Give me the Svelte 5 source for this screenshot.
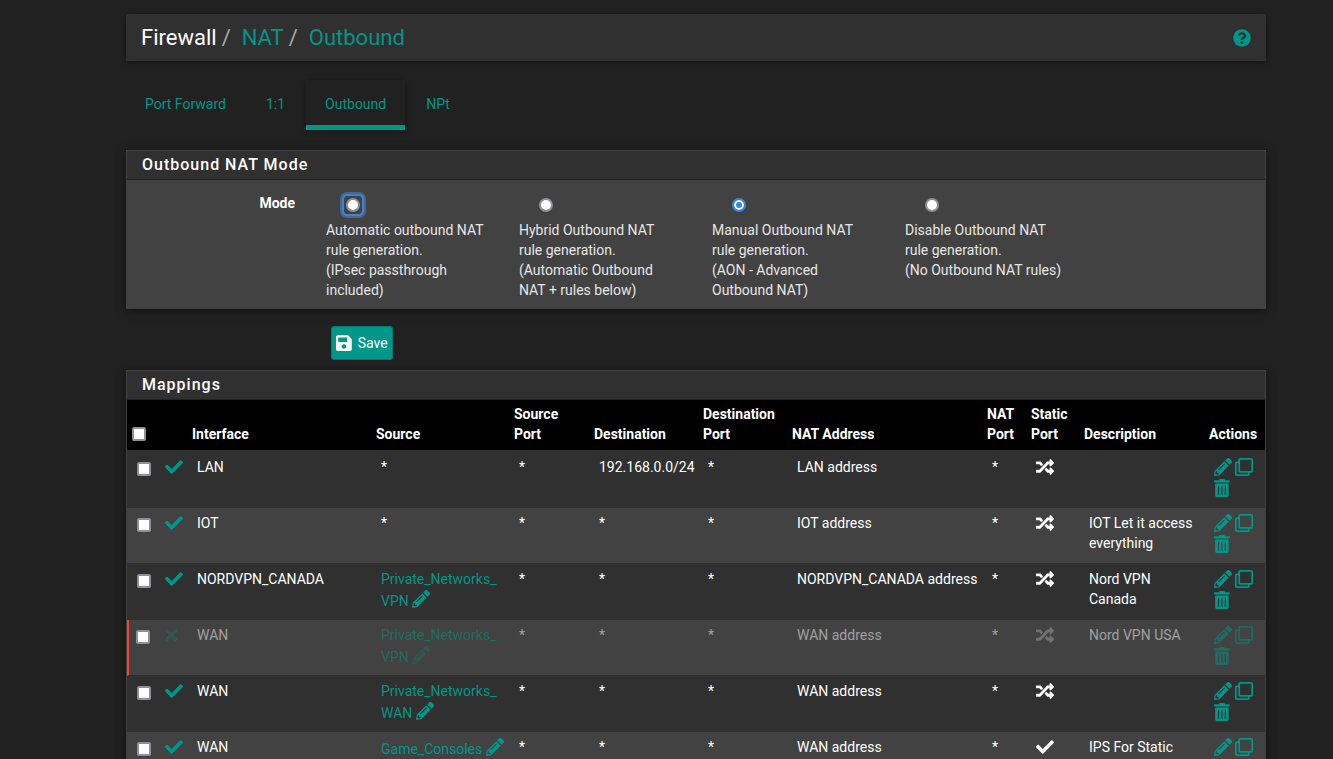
<script lang="ts">
  import { onMount } from 'svelte';

  // Solid icons, each with its own viewBox width (height is always 512).
  const icons = {
    help: { w: 512, d: 'M504 256c0 136.997-111.043 248-248 248S8 392.997 8 256C8 119.083 119.043 8 256 8s248 111.083 248 248zM262.655 90c-54.497 0-89.255 22.957-116.549 63.758-3.536 5.286-2.353 12.415 2.715 16.258l34.699 26.31c5.205 3.947 12.621 3.008 16.665-2.122 17.864-22.658 30.113-35.797 57.303-35.797 20.429 0 45.698 13.148 45.698 32.958 0 14.976-12.363 22.667-32.534 33.976C247.128 238.528 216 254.941 216 296v4c0 6.627 5.373 12 12 12h56c6.627 0 12-5.373 12-12v-1.333c0-28.462 83.186-29.647 83.186-106.667 0-58.002-60.165-102-116.531-102zM256 338c-25.365 0-46 20.635-46 46 0 25.364 20.635 46 46 46s46-20.636 46-46c0-25.365-20.635-46-46-46z' },
    save: { w: 448, d: 'M433.941 129.941l-83.882-83.882A48 48 0 0 0 316.118 32H48C21.49 32 0 53.49 0 80v352c0 26.51 21.49 48 48 48h352c26.51 0 48-21.49 48-48V163.882a48 48 0 0 0-14.059-33.941zM224 416c-35.346 0-64-28.654-64-64 0-35.346 28.654-64 64-64s64 28.654 64 64c0 35.346-28.654 64-64 64zm96-304.52V212c0 6.627-5.373 12-12 12H76c-6.627 0-12-5.373-12-12V108c0-6.627 5.373-12 12-12h228.52c3.183 0 6.235 1.264 8.485 3.515l3.48 3.48A11.996 11.996 0 0 1 320 111.48z' },
    check: { w: 512, d: 'M173.898 439.404l-166.4-166.4c-9.997-9.997-9.997-26.206 0-36.204l36.203-36.204c9.997-9.998 26.207-9.998 36.204 0L192 312.69 432.095 72.596c9.997-9.997 26.207-9.997 36.204 0l36.203 36.204c9.997 9.997 9.997 26.206 0 36.204l-294.4 294.401c-9.998 9.997-26.207 9.997-36.204-.001z' },
    times: { w: 352, d: 'M242.72 256l100.07-100.07c12.28-12.28 12.28-32.19 0-44.48l-22.24-22.24c-12.28-12.28-32.19-12.28-44.48 0L176 189.28 75.93 89.21c-12.28-12.28-32.19-12.28-44.48 0L9.21 111.45c-12.28 12.28-12.28 32.19 0 44.48L109.28 256 9.21 356.07c-12.28 12.28-12.28 32.19 0 44.48l22.24 22.24c12.28 12.28 32.2 12.28 44.48 0L176 322.72l100.07 100.07c12.28 12.28 32.2 12.28 44.48 0l22.24-22.24c12.28-12.28 12.28-32.19 0-44.48L242.72 256z' },
    random: { w: 512, d: 'M504.971 359.029c9.373 9.373 9.373 24.569 0 33.941l-80 79.984c-15.01 15.01-40.971 4.49-40.971-16.971V416h-58.785a12.004 12.004 0 0 1-8.773-3.812l-70.556-75.596 53.333-57.143L352 336h32v-39.981c0-21.438 25.943-31.998 40.971-16.971l80 79.981zM12 176h84l52.781 56.551 53.333-57.143-70.556-75.596A11.999 11.999 0 0 0 122.785 96H12c-6.627 0-12 5.373-12 12v56c0 6.627 5.373 12 12 12zm372 0v39.984c0 21.46 25.961 31.98 40.971 16.971l80-79.984c9.373-9.373 9.373-24.569 0-33.941l-80-79.981C409.943 24.021 384 34.582 384 56.019V96h-58.785a12.004 12.004 0 0 0-8.773 3.812L96 336H12c-6.627 0-12 5.373-12 12v56c0 6.627 5.373 12 12 12h110.785c3.326 0 6.503-1.381 8.773-3.812L352 176h32z' },
    pencil: { w: 512, d: 'M497.9 142.1l-46.1 46.1c-4.7 4.7-12.3 4.7-17 0l-111-111c-4.7-4.7-4.7-12.3 0-17l46.1-46.1c18.7-18.7 49.1-18.7 67.9 0l60.1 60.1c18.8 18.7 18.8 49.1 0 67.9zM284.2 99.8L21.6 362.4.4 483.9c-2.9 16.4 11.4 30.6 27.8 27.8l121.5-21.3 262.6-262.6c4.7-4.7 4.7-12.3 0-17l-111-111c-4.8-4.7-12.4-4.7-17.1 0zM124.1 339.9c-5.5-5.5-5.5-14.3 0-19.8l154-154c5.5-5.5 14.3-5.5 19.8 0s5.5 14.3 0 19.8l-154 154c-5.5 5.5-14.3 5.5-19.8 0zM88 424h48v36.3l-64.5 11.3-31.1-31.1L51.7 376H88v48z' },
    clone: { w: 512, d: 'M464 0H144c-26.51 0-48 21.49-48 48v48H48c-26.51 0-48 21.49-48 48v320c0 26.51 21.49 48 48 48h320c26.51 0 48-21.49 48-48v-48h48c26.51 0 48-21.49 48-48V48c0-26.51-21.49-48-48-48zM362 464H54a6 6 0 0 1-6-6V150a6 6 0 0 1 6-6h42v224c0 26.51 21.49 48 48 48h224v42a6 6 0 0 1-6 6zm96-96H150a6 6 0 0 1-6-6V54a6 6 0 0 1 6-6h308a6 6 0 0 1 6 6v308a6 6 0 0 1-6 6z' },
    trash: { w: 448, d: 'M32 464a48 48 0 0 0 48 48h288a48 48 0 0 0 48-48V128H32zm272-256a16 16 0 0 1 32 0v224a16 16 0 0 1-32 0zm-96 0a16 16 0 0 1 32 0v224a16 16 0 0 1-32 0zm-96 0a16 16 0 0 1 32 0v224a16 16 0 0 1-32 0zM432 32H312l-9.4-18.7A24 24 0 0 0 281.1 0H166.8a23.72 23.72 0 0 0-21.4 13.3L136 32H16A16 16 0 0 0 0 48v32a16 16 0 0 0 16 16h416a16 16 0 0 0 16-16V48a16 16 0 0 0-16-16z' }
  };

  const tabs = ['Port Forward', '1:1', 'Outbound', 'NPt'];

  const modes = [
    { value: 'automatic', title: 'Automatic outbound NAT rule generation.', note: '(IPsec passthrough included)' },
    { value: 'hybrid', title: 'Hybrid Outbound NAT rule generation.', note: '(Automatic Outbound NAT + rules below)' },
    { value: 'advanced', title: 'Manual Outbound NAT rule generation.', note: '(AON - Advanced Outbound NAT)' },
    { value: 'disabled', title: 'Disable Outbound NAT rule generation.', note: '(No Outbound NAT rules)' }
  ];

  // Relative widths; the fixed table layout scales them to the panel.
  const columns = [
    { label: '', width: 32 },
    { label: 'Interface', width: 184 },
    { label: 'Source', width: 138 },
    { label: 'Source Port', width: 80 },
    { label: 'Destination', width: 109 },
    { label: 'Destination Port', width: 89 },
    { label: 'NAT Address', width: 195 },
    { label: 'NAT Port', width: 44 },
    { label: 'Static Port', width: 53 },
    { label: 'Description', width: 125 },
    { label: 'Actions', width: 61 }
  ];

  // alias: source parts, with a line break allowed between them
  let rules = $state([
    { on: true, iface: 'LAN', alias: [], dest: '192.168.0.0/24', nat: 'LAN address', isStatic: false, descr: '', picked: false },
    { on: true, iface: 'IOT', alias: [], dest: '*', nat: 'IOT address', isStatic: false, descr: 'IOT Let it access everything', picked: false },
    { on: true, iface: 'NORDVPN_CANADA', alias: ['Private_Networks_', 'VPN'], dest: '*', nat: 'NORDVPN_CANADA address', isStatic: false, descr: 'Nord VPN Canada', picked: false },
    { on: false, iface: 'WAN', alias: ['Private_Networks_', 'VPN'], dest: '*', nat: 'WAN address', isStatic: false, descr: 'Nord VPN USA', picked: false },
    { on: true, iface: 'WAN', alias: ['Private_Networks_', 'WAN'], dest: '*', nat: 'WAN address', isStatic: false, descr: '', picked: false },
    { on: true, iface: 'WAN', alias: ['Game_Consoles'], dest: '*', nat: 'WAN address', isStatic: true, descr: 'IPS For Static', picked: false }
  ]);

  let mode = $state('advanced');
  let modeList: HTMLElement;

  function pickAll(e: Event) {
    const checked = (e.currentTarget as HTMLInputElement).checked;
    for (const rule of rules) rule.picked = checked;
  }

  onMount(() => modeList.querySelector('input')?.focus());
</script>

{#snippet icon(name: keyof typeof icons)}
  <svg class="icon" viewBox="0 0 {icons[name].w} 512" aria-hidden="true"><path d={icons[name].d} /></svg>
{/snippet}

<div class="page">
  <header class="crumbs">
    <h1>Firewall<span class="sep">/</span><a href="#nat">NAT</a><span class="sep">/</span><a href="#outbound">Outbound</a></h1>
    <a class="help" href="#help" aria-label="Help">{@render icon('help')}</a>
  </header>

  <nav class="tabs">
    {#each tabs as tab}
      <a href="#{tab}" class:active={tab === 'Outbound'}>{tab}</a>
    {/each}
  </nav>

  <form onsubmit={(e) => e.preventDefault()}>
    <section class="panel">
      <h2>Outbound NAT Mode</h2>
      <div class="mode-body" role="radiogroup" aria-labelledby="mode-label">
        <span class="mode-label" id="mode-label">Mode</span>
        <div class="modes" bind:this={modeList}>
          {#each modes as m}
            <label>
              <span class="ring"><input type="radio" name="mode" value={m.value} bind:group={mode} /></span>
              {m.title}<br />{m.note}
            </label>
          {/each}
        </div>
      </div>
    </section>
    <button class="save" type="submit">{@render icon('save')}Save</button>
  </form>

  <section class="panel">
    <h2>Mappings</h2>
    <table>
      <colgroup>
        <col style:width="28px" />
        {#each columns as c}
          <col style:width="{c.width}px" />
        {/each}
      </colgroup>
      <thead>
        <tr>
          <th><input type="checkbox" aria-label="Select all" onchange={pickAll} /></th>
          {#each columns as c}
            <th>{c.label}</th>
          {/each}
        </tr>
      </thead>
      <tbody>
        {#each rules as rule}
          <tr class:disabled={!rule.on}>
            <td class="pick"><input type="checkbox" aria-label="Select rule" bind:checked={rule.picked} /></td>
            <td class="state">{@render icon(rule.on ? 'check' : 'times')}</td>
            <td>{rule.iface}</td>
            <td class="source">
              {#if rule.alias.length}
                <a href="#alias">{rule.alias[0]}<wbr />{rule.alias[1] ?? ''} {@render icon('pencil')}</a>
              {:else}
                *
              {/if}
            </td>
            <td>*</td>
            <td>{rule.dest}</td>
            <td>*</td>
            <td>{rule.nat}</td>
            <td>*</td>
            <td class="static">{@render icon(rule.isStatic ? 'check' : 'random')}</td>
            <td class="descr">{rule.descr}</td>
            <td>
              <div class="actions">
                <a href="#edit" aria-label="Edit mapping">{@render icon('pencil')}</a>
                <a href="#copy" aria-label="Copy mapping">{@render icon('clone')}</a>
                <a href="#delete" aria-label="Delete mapping">{@render icon('trash')}</a>
              </div>
            </td>
          </tr>
        {/each}
      </tbody>
    </table>
  </section>
</div>

<style>
  :global(body) {
    margin: 0;
    background: #212121;
  }

  .page {
    box-sizing: border-box;
    height: 100vh;
    overflow-y: auto;
    scrollbar-width: none;
    padding: 14px 67px 0 126px;
    color: #fff;
    font: 14px/20px Roboto, sans-serif;
  }

  a {
    color: #009688;
    text-decoration: none;
  }

  .icon {
    display: inline-block;
    height: 18px;
    fill: currentColor;
    vertical-align: -2px;
  }

  /* Makes room above the glyph, so it sits level with the row's text. */
  td .icon {
    margin-top: 1px;
  }

  .crumbs {
    display: flex;
    align-items: center;
    justify-content: space-between;
    height: 47px;
    padding: 0 15px;
    background: #303030;
    box-shadow: 0 1px 6px rgba(0, 0, 0, 0.4);
  }

  h1 {
    margin: 0;
    font-size: 22px;
    font-weight: 400;
    line-height: 24px;
  }

  .sep {
    padding: 0 11px 0 5px;
    color: #aaa;
  }

  .help {
    display: flex;
  }

  .tabs {
    display: flex;
    gap: 2px;
    margin: 19px 0 20px;
  }

  .tabs a {
    padding: 14px 19px 11px;
    border-bottom: 5px solid transparent;
  }

  .tabs .active {
    border-color: #009688;
    box-shadow: 0 1px 6px rgba(0, 0, 0, 0.4);
  }

  .panel {
    border: 1px solid #424242;
    box-shadow: 0 2px 8px rgba(0, 0, 0, 0.5);
  }

  h2 {
    margin: 0;
    padding: 4px 15px;
    border-bottom: 1px solid #212121;
    background: #303030;
    font-size: 16px;
    font-weight: 500;
    line-height: 20px;
    letter-spacing: 1px;
  }

  .mode-body {
    display: flex;
    padding: 13px 0 8px;
    background: #424242;
  }

  .mode-label {
    flex: none;
    width: 168px;
    margin-right: 31px;
    font-weight: 700;
    text-align: right;
  }

  .modes {
    display: flex;
    flex: 1;
    gap: 33px;
    color: #e6e6e6;
  }

  .modes label {
    width: 160px;
  }

  .ring {
    display: block;
    width: 18px;
    height: 18px;
    margin: 3px 0 6px 18px;
    border-radius: 3px;
  }

  .ring:focus-within {
    box-shadow: 0 0 0 2px #3584e4, 0 0 0 4px #4c6686;
  }

  input {
    appearance: none;
    box-sizing: border-box;
    display: block;
    width: 14px;
    height: 14px;
    margin: 0;
    border: 2px solid #8f8f9d;
    border-radius: 2px;
    background: #fff;
    outline: none;
  }

  input[type='radio'] {
    border-radius: 50%;
  }

  .ring input {
    position: relative;
    top: 2px;
    left: 2px;
  }

  input:checked {
    border-color: #3584e4;
    background: #3584e4;
  }

  input[type='radio']:checked {
    box-shadow: inset 0 0 0 2px #fff;
  }

  .save {
    display: flex;
    align-items: center;
    gap: 6px;
    height: 34px;
    margin: 17px 0 10px 205px;
    padding: 0 4px;
    border: 1px solid #007d71;
    border-radius: 3px;
    background: #009688;
    color: #fff;
    font: inherit;
  }

  table {
    width: 100%;
    table-layout: fixed;
    border-spacing: 0;
  }

  th {
    height: 40px;
    padding: 4px 5px 6px;
    background: #000;
    font-weight: 700;
    text-align: left;
    vertical-align: bottom;
  }

  th input {
    margin-bottom: 3px;
  }

  td {
    height: 45px;
    padding: 5px 0 5px 10px;
    border-bottom: 1px solid #303030;
    background: #303030;
    vertical-align: top;
  }

  tr:first-child td {
    border-top: 2px solid #303030;
  }

  tr:nth-child(even) td {
    background: #424242;
  }

  .pick input {
    margin-top: 5px;
  }

  .state {
    color: #009688;
  }

  .descr {
    padding-right: 10px;
  }

  .actions {
    display: flex;
    flex-wrap: wrap;
    gap: 2px 3px;
    width: 46px;
  }

  .actions a {
    display: flex;
  }

  .disabled td {
    color: rgba(255, 255, 255, 0.5);
  }

  .disabled .pick {
    padding-left: 7px;
    border-left: 2px solid #f44336;
  }

  .disabled .state {
    color: rgba(0, 150, 136, 0.25);
  }

  .disabled a,
  .disabled .source .icon,
  .disabled .static .icon {
    opacity: 0.5;
  }
</style>
